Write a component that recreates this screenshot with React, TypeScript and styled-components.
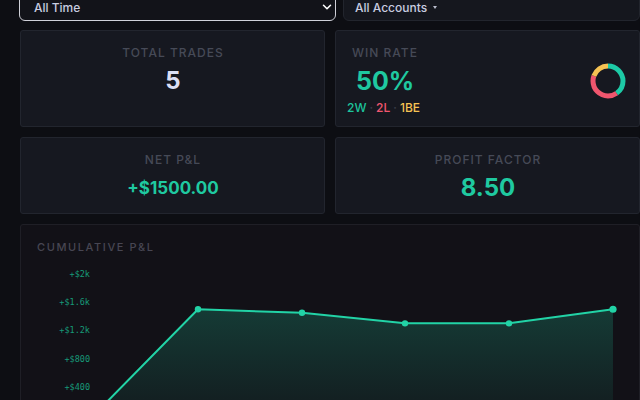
import React from "react";
import styled, { createGlobalStyle } from "styled-components";
import { ChevronDown } from "lucide-react";

const Global = createGlobalStyle`
  html, body { margin: 0; padding: 0; background: #0d0e13; overflow: hidden; }
  body { font-family: Inter, "Noto Sans", sans-serif; -webkit-font-smoothing: antialiased; }
`;

const Page = styled.div`
  width: 660px;
  box-sizing: border-box;
  padding: 0 20px;
`;

const FilterRow = styled.div`
  display: flex;
  gap: 7px;
  height: 30px;
  margin-top: -9px;
`;

const SelectBox = styled.div<{ $focused?: boolean }>`
  box-sizing: border-box;
  height: 30px;
  display: flex;
  align-items: center;
  justify-content: space-between;
  padding: ${(p) => (p.$focused ? "2px 1px 0 14px" : "2px 0 0 11px")};
  border-radius: 6px;
  background: ${(p) => (p.$focused ? "#121319" : "#15171e")};
  border: ${(p) => (p.$focused ? "1.5px solid #cfd0d8" : "1px solid #22252d")};
  width: ${(p) => (p.$focused ? "317px" : "auto")};
  flex: ${(p) => (p.$focused ? "0 0 auto" : "1")};
  ${(p) => (p.$focused ? "margin-left: -1px;" : "")}
  color: #c9cde0;
  font-size: 12px;
  font-weight: 500;
`;

const SelectLabel = styled.span`
  display: inline-flex;
  align-items: center;
  gap: 6px;
`;

const Caret = styled.span`
  width: 0;
  height: 0;
  border-left: 2.5px solid transparent;
  border-right: 2.5px solid transparent;
  border-top: 3px solid #b8bccb;
  margin-top: 1px;
`;

const Grid = styled.div`
  display: grid;
  grid-template-columns: 305px 305px;
  gap: 10px;
  margin-top: 9px;
`;

const Card = styled.div<{ $center?: boolean }>`
  box-sizing: border-box;
  background: #161820;
  border: 1px solid #22252e;
  border-radius: 3px;
  padding: 15px 15px 10px 16px;
  display: flex;
  flex-direction: column;
  align-items: ${(p) => (p.$center ? "center" : "flex-start")};
`;

const RowCard = styled(Card)`
  flex-direction: row;
  align-items: center;
  justify-content: space-between;
`;

const Stack = styled.div`
  display: flex;
  flex-direction: column;
  align-items: flex-start;
`;

const Label = styled.div`
  font-size: 12px;
  line-height: 14px;
  letter-spacing: 1px;
  text-transform: uppercase;
  color: #464a57;
  font-weight: 500;
`;

const Value = styled.div<{ $color: string; $size: number; $shift?: number }>`
  margin-top: 6px;
  font-size: ${(p) => p.$size}px;
  line-height: 30px;
  font-weight: 700;
  color: ${(p) => p.$color};
  margin-left: ${(p) => p.$shift ?? 0}px;
`;

const Sub = styled.div`
  margin-top: 4px;
  margin-left: -5px;
  font-size: 12px;
  line-height: 16px;
  font-weight: 500;
  display: flex;
  gap: 3px;
`;

const Tag = styled.span<{ $color: string }>`
  color: ${(p) => p.$color};
`;

const ChartCard = styled.div`
  grid-column: 1 / span 2;
  box-sizing: border-box;
  background: #121117;
  border: 1px solid #1f1f26;
  border-radius: 3px;
  padding: 16px 0 0 16px;
  height: 200px;
  overflow: hidden;
`;

const ChartTitle = styled.div`
  font-size: 11px;
  line-height: 12px;
  letter-spacing: 1.6px;
  color: #474652;
  font-weight: 500;
`;

const ChartSvg = styled.svg`
  display: block;
  margin-top: 7px;
`;

const TEAL = "#1fc9a0";

const Donut: React.FC = () => {
  const r = 15;
  const c = 2 * Math.PI * r;
  const segs = [
    { v: 0.4, color: "#1dcaa6" },
    { v: 0.4, color: "#f0566e" },
    { v: 0.2, color: "#f5c253" },
  ];
  let off = 0;
  return (
    <svg width="36" height="36" viewBox="0 0 36 36" style={{ marginRight: -2 }}>
      <g transform="rotate(-90 18 18)">
        {segs.map((s, i) => {
          const el = (
            <circle
              key={i}
              cx="18"
              cy="18"
              r={r}
              fill="none"
              stroke={s.color}
              strokeWidth="5"
              strokeDasharray={`${s.v * c} ${c}`}
              strokeDashoffset={-off * c}
            />
          );
          off += s.v;
          return el;
        })}
      </g>
    </svg>
  );
};

const Chart: React.FC = () => {
  const values = [0, 1500, 1450, 1300, 1300, 1500];
  const xs = [57, 161, 265, 368, 472, 576];
  const y = (v: number) => 155 - v * 0.0705;
  const pts = values.map((v, i) => [xs[i], y(v)] as const);
  const line = pts.map((p, i) => `${i ? "L" : "M"}${p[0]} ${p[1]}`).join(" ");
  const area = `${line} L576 170 L57 170 Z`;
  const ticks = [
    { t: "+$2k", v: 2000 },
    { t: "+$1.6k", v: 1600 },
    { t: "+$1.2k", v: 1200 },
    { t: "+$800", v: 800 },
    { t: "+$400", v: 400 },
  ];
  return (
    <ChartSvg width="600" height="150" viewBox="0 0 600 150">
      <defs>
        <linearGradient id="fillG" x1="0" y1="0" x2="0" y2="1">
          <stop offset="0%" stopColor="#1fd0a2" stopOpacity="0.22" />
          <stop offset="100%" stopColor="#1fd0a2" stopOpacity="0.03" />
        </linearGradient>
      </defs>
      {ticks.map((tk) => (
        <text
          key={tk.t}
          x="53"
          y={y(tk.v) + 3}
          textAnchor="end"
          fontFamily='"DejaVu Sans Mono", "Liberation Mono", monospace'
          fontSize="8.5"
          fill="#179a78"
        >
          {tk.t}
        </text>
      ))}
      <path d={area} fill="url(#fillG)" />
      <path d={line} fill="none" stroke="#22d3a6" strokeWidth="2" strokeLinejoin="round" />
      {pts.map((p, i) => (
        <circle key={i} cx={p[0]} cy={p[1]} r={i === pts.length - 1 ? 3.6 : 3.2} fill="#22d3a6" />
      ))}
    </ChartSvg>
  );
};

export default function App() {
  return (
    <>
      <Global />
      <Page>
        <FilterRow>
          <SelectBox $focused>
            <span>All Time</span>
            <ChevronDown size={14} strokeWidth={2.6} color="#ffffff" />
          </SelectBox>
          <SelectBox>
            <SelectLabel>
              All Accounts
              <Caret />
            </SelectLabel>
          </SelectBox>
        </FilterRow>
        <Grid>
          <Card $center>
            <Label>Total Trades</Label>
            <Value $color="#dcdff3" $size={24}>5</Value>
          </Card>
          <RowCard>
            <Stack>
              <Label>Win Rate</Label>
              <Value $color={TEAL} $size={25} $shift={4}>50%</Value>
              <Sub>
                <Tag $color="#1dc49c">2W</Tag>
                <Tag $color="#3a3d48">·</Tag>
                <Tag $color="#f0566e">2L</Tag>
                <Tag $color="#3a3d48">·</Tag>
                <Tag $color="#f5c253">1BE</Tag>
              </Sub>
            </Stack>
            <Donut />
          </RowCard>
          <Card $center>
            <Label>Net P&amp;L</Label>
            <Value $color={TEAL} $size={17}>+$1500.00</Value>
          </Card>
          <Card $center>
            <Label>Profit Factor</Label>
            <Value $color={TEAL} $size={24}>8.50</Value>
          </Card>
          <ChartCard>
            <ChartTitle>CUMULATIVE P&amp;L</ChartTitle>
            <Chart />
          </ChartCard>
        </Grid>
      </Page>
    </>
  );
}
